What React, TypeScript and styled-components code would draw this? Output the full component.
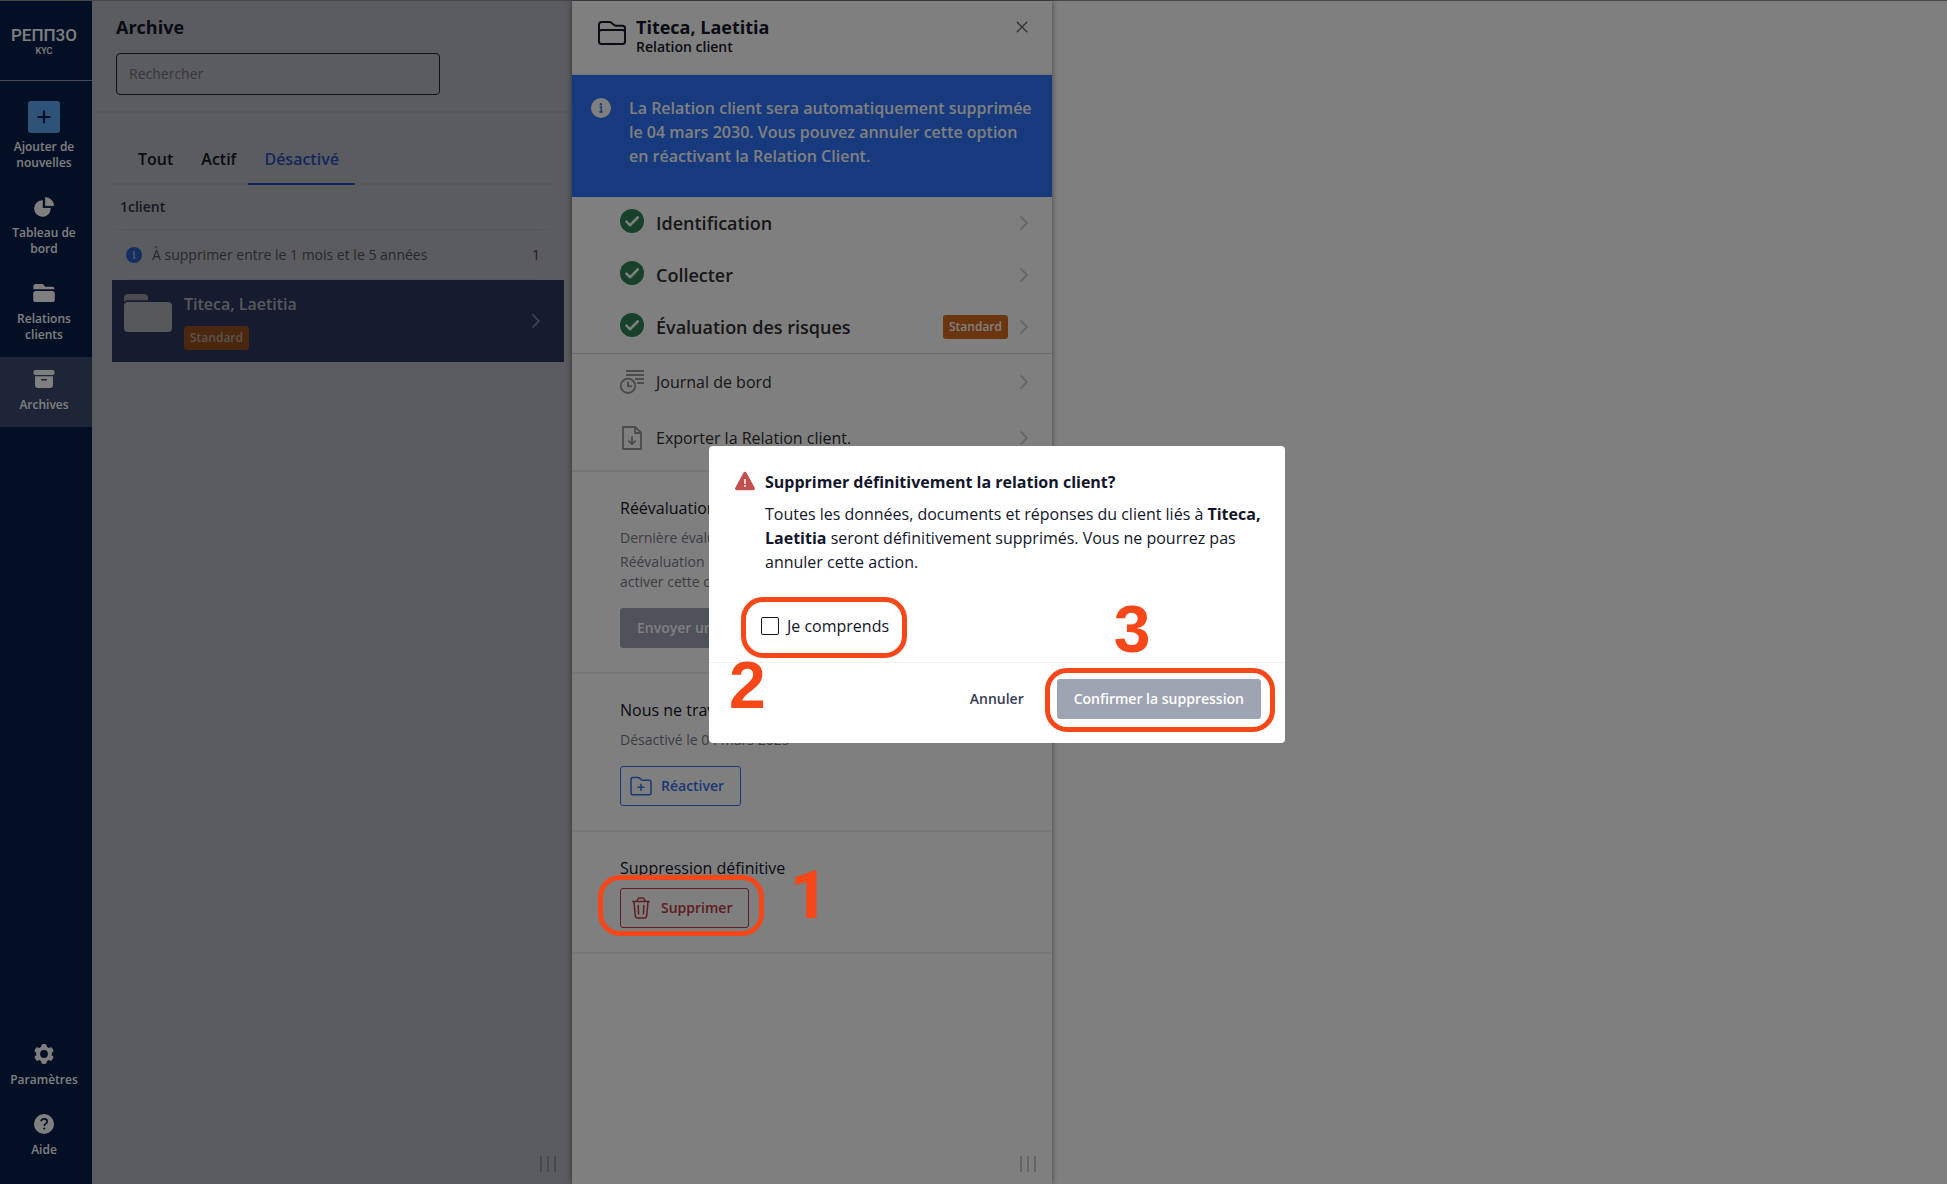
import React from "react";
import styled, { createGlobalStyle } from "styled-components";

const GlobalStyle = createGlobalStyle`
  *, *::before, *::after { box-sizing: border-box; }
  body {
    margin: 0;
    font-family: "Open Sans", "Noto Sans", sans-serif;
    font-size: 14px;
    line-height: 20px;
    color: #12162a;
    background: #ffffff;
  }
  button, input { font-family: inherit; }
  h1, h2, h3, p { margin: 0; }
`;

const ACCENT = "#f54718";

/* ---------- shell ---------- */

const Shell = styled.div`
  display: flex;
  min-height: 100vh;
  border-top: 1px solid #8c8c88;
`;

const Sidebar = styled.nav`
  flex: none;
  width: 92px;
  padding-bottom: 12px;
  display: flex;
  flex-direction: column;
  background: #041e4a;
  color: #ffffff;
`;

const Brand = styled.div`
  height: 80px;
  padding: 24px 4px 0 0;
  display: flex;
  flex-direction: column;
  align-items: center;
  border-bottom: 1px solid #8b93a6;
  margin-bottom: 10px;
`;

const Wordmark = styled.span`
  font-family: "Roboto", sans-serif;
  font-size: 17px;
  font-weight: 500;
  line-height: 20px;
`;

const Product = styled.span`
  font-family: "Roboto", sans-serif;
  font-size: 9px;
  font-weight: 500;
  line-height: 12px;
`;

const NavItem = styled.a<{ $active?: boolean }>`
  display: flex;
  flex-direction: column;
  align-items: center;
  gap: 6px;
  padding: 10px 8px 14px 4px;
  color: #ffffff;
  background: ${(p) => (p.$active ? "#3c4a6c" : "transparent")};
  font-size: 12px;
  font-weight: 600;
  line-height: 16px;
  text-align: center;
  text-decoration: none;
`;

const NavIcon = styled.span`
  height: 24px;
  display: grid;
  place-items: center;
`;

const AddTile = styled.span`
  width: 32px;
  height: 32px;
  border-radius: 3px;
  display: grid;
  place-items: center;
  background: #5ea4f2;
`;

const Spacer = styled.div`
  flex: 1;
`;

/* ---------- archive list ---------- */

const ListPanel = styled.section`
  flex: none;
  width: 480px;
  display: flex;
  flex-direction: column;
  background: #b6b8c0;
`;

const ListHeader = styled.header`
  padding: 14px 24px 16px;
  border-bottom: 2px solid #b0b1b8;
`;

const PanelTitle = styled.h1`
  font-size: 18px;
  font-weight: 700;
  line-height: 24px;
`;

const Search = styled.input`
  display: block;
  width: 324px;
  height: 42px;
  margin-top: 14px;
  padding: 0 12px 2px;
  border: 1px solid #1c2138;
  border-radius: 4px;
  background: transparent;
  font-size: 14px;
  &::placeholder { color: #6c6e78; opacity: 1; }
`;

const Tabs = styled.div`
  display: flex;
  margin: 24px 16px 0;
  padding-left: 16px;
  border-bottom: 2px solid #b0b1b8;
`;

const Tab = styled.button<{ $active?: boolean }>`
  position: relative;
  height: 46px;
  padding: 0 14px 2px;
  border: 0;
  background: none;
  font-size: 16px;
  font-weight: 600;
  color: ${(p) => (p.$active ? "#284fb8" : "#12162a")};
  &::after {
    content: "";
    display: ${(p) => (p.$active ? "block" : "none")};
    position: absolute;
    left: -2px;
    right: -2px;
    bottom: -2px;
    height: 2px;
    background: #284fb8;
  }
`;

const Count = styled.div`
  margin: 0 16px;
  padding: 12px;
  border-bottom: 1px solid #aeb0b7;
  font-weight: 600;
  color: #2c3044;
`;

const GroupRow = styled.div`
  display: flex;
  align-items: center;
  gap: 10px;
  height: 50px;
  margin: 0 32px;
  padding: 0 0 0 2px;
  border-top: 1px solid #b0b1b8;
  border-bottom: 1px solid #b0b1b8;
  color: #50525e;
`;

const GroupCount = styled.span`
  margin-left: auto;
  color: #3c3f4c;
`;

const ClientRow = styled.a`
  display: flex;
  gap: 12px;
  height: 82px;
  margin: 0 8px 0 20px;
  padding: 12px 24px 12px 12px;
  background: #2e3660;
  color: #aeb0b7;
  text-decoration: none;
`;

const ClientInfo = styled.span`
  flex: 1;
  display: flex;
  flex-direction: column;
  align-items: flex-start;
  gap: 10px;
`;

const ClientName = styled.span`
  font-size: 16px;
  font-weight: 600;
  line-height: 24px;
`;

const Badge = styled.span<{ $muted?: boolean }>`
  height: 24px;
  padding: 0 6px;
  border-radius: 3px;
  font-size: 12px;
  font-weight: 600;
  line-height: 24px;
  color: ${(p) => (p.$muted ? "#b4a89e" : "#ffffff")};
  background: ${(p) => (p.$muted ? "#964e20" : "#d66a1e")};
`;

const Middle = styled.span`
  display: flex;
  align-items: center;
`;

const Grip = styled.div`
  display: flex;
  justify-content: space-between;
  width: 16px;
  height: 16px;
  margin: auto 16px 12px auto;
  &::before, &::after, & > i {
    content: "";
    width: 2px;
    background: rgba(0, 0, 0, 0.2);
  }
`;

/* ---------- detail ---------- */

const DetailPanel = styled.section`
  position: relative;
  flex: none;
  width: 480px;
  display: flex;
  flex-direction: column;
  background: #ffffff;
  box-shadow: 0 0 6px rgba(0, 0, 0, 0.5);
`;

const DetailHeader = styled.header`
  display: flex;
  gap: 10px;
  height: 74px;
  padding: 14px 24px 0 26px;
  border-bottom: 2px solid #f0f0f2;
`;

const HeaderIcon = styled.span`
  padding-top: 6px;
  line-height: 0;
`;

const HeaderText = styled.div`
  flex: 1;
`;

const Subtitle = styled.p`
  font-size: 14px;
  font-weight: 600;
  line-height: 16px;
`;

const IconButton = styled.button`
  display: grid;
  place-items: center;
  width: 12px;
  height: 24px;
  padding: 0;
  border: 0;
  background: none;
`;

const Banner = styled.div`
  display: flex;
  gap: 18px;
  padding: 21px 12px 29px 19px;
  background: #2e72fa;
  color: #ffffff;
  font-size: 16px;
  font-weight: 600;
  line-height: 24px;
`;

const BannerIcon = styled.span`
  padding-top: 2px;
  line-height: 0;
`;

const LinkGroup = styled.div<{ $padded?: boolean }>`
  padding-bottom: ${(p) => (p.$padded ? "4px" : "0")};
  border-bottom: ${(p) => (p.$padded ? "2px solid #ececee" : "1px solid #d8d8dc")};
`;

const StepLink = styled.a<{ $minor?: boolean }>`
  display: flex;
  align-items: center;
  gap: 12px;
  height: ${(p) => (p.$minor ? "56px" : "52px")};
  padding: 0 24px 0 48px;
  color: #2e2e30;
  font-size: ${(p) => (p.$minor ? "16px" : "18px")};
  font-weight: ${(p) => (p.$minor ? 400 : 600)};
  line-height: 24px;
  text-decoration: none;
`;

const StepIcon = styled.span<{ $raised?: boolean }>`
  padding-bottom: ${(p) => (p.$raised ? "4px" : "0")};
  line-height: 0;
`;

const StepLabel = styled.span`
  flex: 1;
`;

const Section = styled.section`
  display: flex;
  flex-direction: column;
  align-items: flex-start;
  padding: 24px 48px;
  border-bottom: 2px solid #f0f0f2;
`;

const SectionTitle = styled.h3`
  font-size: 16px;
  font-weight: 400;
  line-height: 24px;
  white-space: nowrap;
`;

const SectionNote = styled.p`
  margin-top: 8px;
  color: #767a8a;
  & + & { margin-top: 4px; }
`;

const ActionSlot = styled.div<{ $tight?: boolean }>`
  position: relative;
  margin-top: ${(p) => (p.$tight ? "8px" : "16px")};
`;

const Button = styled.button<{ $tone: "blue" | "red" | "grey" | "text" }>`
  display: flex;
  align-items: center;
  gap: 8px;
  height: 40px;
  padding: ${(p) => (p.$tone === "blue" || p.$tone === "red" ? "0 16px 0 8px" : "0 17px")};
  border: ${(p) => (p.$tone === "blue" || p.$tone === "red" ? "1px solid currentColor" : "0")};
  border-radius: 3px;
  background: ${(p) => (p.$tone === "grey" ? "#9ea4b2" : "transparent")};
  color: ${(p) =>
    ({ blue: "#3470ee", red: "#be3c42", grey: "#ffffff", text: "#363c52" })[p.$tone]};
  font-size: 14px;
  font-weight: 600;
  line-height: 20px;
  white-space: nowrap;
`;

const Rest = styled.main`
  flex: 1;
  background: #ffffff;
`;

/* ---------- dialog ---------- */

const Overlay = styled.div`
  position: fixed;
  inset: 0;
  z-index: 10;
  display: grid;
  place-items: center;
  padding: 5px 0 0 47px;
  background: rgba(0, 0, 0, 0.5);
`;

const Dialog = styled.div`
  width: 576px;
  border-radius: 4px;
  background: #ffffff;
`;

const DialogBody = styled.div`
  display: grid;
  grid-template-columns: 20px 1fr;
  column-gap: 10px;
  padding: 24px 20px 24px 26px;
  font-size: 16px;
  line-height: 24px;
`;

const DialogTitle = styled.h2`
  font-size: 16px;
  font-weight: 700;
  line-height: 24px;
`;

const DialogText = styled.p`
  grid-column: 2;
  margin-top: 8px;
`;

const Consent = styled.label`
  position: relative;
  grid-column: 1 / -1;
  justify-self: start;
  display: flex;
  align-items: center;
  gap: 8px;
  margin: 40px 0 0 26px;
`;

const Checkbox = styled.input`
  appearance: none;
  width: 18px;
  height: 18px;
  margin: 0;
  border: 1px solid #12162a;
  border-radius: 2px;
  background: #ffffff;
`;

const DialogFooter = styled.footer`
  display: flex;
  justify-content: flex-end;
  gap: 16px;
  padding: 16px 24px 24px;
  border-top: 1px solid #f0f1f3;
`;

const FooterSlot = styled.div`
  position: relative;
`;

/* ---------- tutorial marks ---------- */

const Ring = styled.span<{ $inset: string }>`
  position: absolute;
  z-index: 20;
  inset: ${(p) => p.$inset};
  border: 5px solid ${ACCENT};
  border-radius: 22px;
  pointer-events: none;
`;

const StepNumber = styled.span<{ $left: number; $top: number; $plain?: boolean }>`
  position: absolute;
  z-index: 20;
  left: ${(p) => p.$left}px;
  top: ${(p) => p.$top}px;
  color: ${ACCENT};
  font-family: ${(p) => (p.$plain ? '"Roboto", sans-serif' : '"Liberation Sans", Arial, sans-serif')};
  font-size: 66px;
  font-weight: ${(p) => (p.$plain ? 800 : 700)};
  line-height: 66px;
  pointer-events: none;
`;

/* ---------- icons ---------- */

const Chevron = ({ color = "#cfcfd2" }: { color?: string }) => (
  <svg width="8" height="16" viewBox="0 0 8 16" fill="none" stroke={color} strokeWidth="1.9">
    <path d="M.5 1.500 7 8 .5 14.500" />
  </svg>
);

const InfoIcon = ({ size, fill, mark }: { size: number; fill: string; mark: string }) => (
  <svg width={size} height={size} viewBox="0 0 20 20">
    <circle cx="10" cy="10" r="10" fill={fill} />
    <circle cx="9.900" cy="6.200" r="1.200" fill={mark} />
    <path d="M8.600 9h1.700v4.800M8.400 14h3.400" fill="none" stroke={mark} strokeWidth="1.500" />
  </svg>
);

const CheckIcon = () => (
  <svg width="24" height="24" viewBox="0 0 24 24">
    <circle cx="12" cy="12" r="12" fill="#2e8256" />
    <path d="m6.400 12.600 3.800 3.600 7.600-7.800" fill="none" stroke="#ffffff" strokeWidth="2.600" strokeLinecap="round" strokeLinejoin="round" />
  </svg>
);

const PlusIcon = () => (
  <svg width="14" height="14" viewBox="0 0 14 14" stroke="#041e4a" strokeWidth="2.200" strokeLinecap="round">
    <path d="M7 1.400v11.200M1.400 7h11.200" />
  </svg>
);

const PieIcon = () => (
  <svg width="20" height="20" viewBox="0 0 20 20" fill="#ffffff">
    <path d="M8.800 3.200v7.900h7.900A8.300 8.300 0 1 1 8.800 3.200Z" />
    <path d="M11.400.4A8.500 8.500 0 0 1 19.800 8.700h-8.400Z" stroke="#ffffff" strokeWidth=".6" strokeLinejoin="round" />
  </svg>
);

const FolderSolidIcon = () => (
  <svg width="22" height="18" viewBox="0 0 22 18" fill="#ffffff">
    <path d="M.4 5.600V2.200C.4 1 1.200 0 2.600 0h6c1 0 1.600.3 2.200 1l1.200 1.400c.3.300.6.400 1 .4h6.200c1.300 0 2.200.9 2.200 2.200v.6c-.5-.3-1.100-.4-1.700-.4H2.300c-.7 0-1.300.1-1.900.4Z" />
    <rect x=".2" y="7" width="21.600" height="11" rx="2.600" />
  </svg>
);

const ArchiveIcon = () => (
  <svg width="22" height="18" viewBox="0 0 22 18">
    <rect x=".5" width="21" height="5" rx="2" fill="#ffffff" />
    <path d="M2 6.200h18v8.600a3.200 3.200 0 0 1-3.200 3.200H5.200A3.200 3.200 0 0 1 2 14.800Z" fill="#ffffff" />
    <path d="M8.600 9.700h4.800" stroke="#3c4a6c" strokeWidth="1.400" strokeLinecap="round" />
  </svg>
);

const GearIcon = () => (
  <svg width="20" height="20" viewBox="0 0 20 20" fill="#ffffff">
    <circle cx="10" cy="10" r="5.800" fill="none" stroke="#ffffff" strokeWidth="3.800" />
    {[0, 60, 120, 180, 240, 300].map((a) => (
      <rect key={a} x="7.200" y="0" width="5.600" height="5" rx="2.200" transform={`rotate(${a} 10 10)`} />
    ))}
  </svg>
);

const HelpIcon = () => (
  <svg width="20" height="20" viewBox="0 0 20 20">
    <circle cx="10" cy="10" r="10" fill="#ffffff" />
    <path d="M7 7.300C7.400 5.700 8.500 4.900 10.100 4.900c1.900 0 3.100 1 3.100 2.500 0 1.300-.8 1.900-1.700 2.500-.9.600-1.300 1-1.300 2.100" fill="none" stroke="#041e4a" strokeWidth="1.700" />
    <circle cx="10.200" cy="14.500" r="1.100" fill="#041e4a" />
  </svg>
);

const BigFolderIcon = () => (
  <svg width="48" height="42" viewBox="0 0 48 42">
    <path d="M0 10V6a4 4 0 0 1 4-4h16a4 4 0 0 1 4 4v2.200H4C2 8.200.8 8.800 0 10Z" fill="#96979e" />
    <rect y="10" width="48" height="30" rx="4" fill="#aeb0b4" />
  </svg>
);

const FolderOutlineIcon = () => (
  <svg width="28" height="24" viewBox="0 0 28 24" fill="none" stroke="#12162a" strokeWidth="2" strokeLinejoin="round">
    <path d="M1 20V3.500C1 2 2 1 3.500 1h7.800c.8 0 1.400.2 2 .8l2.800 2.300c.5.400 1 .6 1.700.6h6.700C26 4.700 27 5.700 27 7.200V20.500c0 1.500-1 2.500-2.500 2.500h-21C2 23 1 22 1 20.500V11.300C1 9.800 2 8.900 3.500 8.900h21c1.500 0 2.500.9 2.500 2.400" />
  </svg>
);

const CloseIcon = () => (
  <svg width="12" height="12" viewBox="0 0 12 12" stroke="#5c6070" strokeWidth="1.300" strokeLinecap="round">
    <path d="m1.200 1.200 9.600 9.600M10.800 1.200l-9.600 9.600" />
  </svg>
);

const LogIcon = () => (
  <svg width="24" height="24" viewBox="0 0 24 24" fill="none" stroke="#96969a" strokeWidth="1.900">
    <path d="M6 1h18M6 5h18M15 9h9M17 13h7" />
    <circle cx="8" cy="15.800" r="7.200" />
    <path d="M8 11.500v4.800h4" />
  </svg>
);

const ExportIcon = () => (
  <svg width="24" height="24" viewBox="0 0 24 24" fill="none" stroke="#96969a" strokeWidth="1.800" strokeLinejoin="round">
    <path d="M15.200 1H3v22h18V6.600Z" />
    <path d="M15 1v6h6M12 10.500v7.500M8.400 14.700l3.600 3.500 3.600-3.500" />
  </svg>
);

const FolderPlusIcon = () => (
  <svg width="24" height="24" viewBox="0 0 24 24" fill="none" stroke="currentColor" strokeWidth="1.500" strokeLinecap="round" strokeLinejoin="round">
    <path d="M2 18.700V5.300C2 4.200 2.900 3.500 4 3.500h5.200c.6 0 1 .2 1.400.6l1.700 1.600c.4.400.9.600 1.400.6H20c1.200 0 2 .8 2 2v10.400c0 1.200-.8 2-2 2H4c-1.200 0-2-.8-2-2ZM12 10.200v6M9 13.200h6" />
  </svg>
);

const TrashIcon = () => (
  <svg width="24" height="24" viewBox="0 0 24 24" fill="none" stroke="currentColor" strokeWidth="1.500" strokeLinecap="round" strokeLinejoin="round">
    <path d="M3.700 5.500h16.600M8 5.300l.5-1.500C8.800 2.500 9.600 2 10.700 2h2.600c1.100 0 1.900.5 2.200 1.800l.5 1.500M5 5.800l1.300 14c.1 1.400 1 2.200 2.300 2.200h6.800c1.300 0 2.200-.8 2.300-2.200l1.300-14M9.200 9.500l.4 8.500M14.800 9.500l-.4 8.500" />
  </svg>
);

const WarningIcon = () => (
  <svg width="20" height="22" viewBox="0 0 20 22">
    <path d="M10 3.500 1.800 18.500h16.400Z" fill="#c24f4f" stroke="#c24f4f" strokeWidth="3.400" strokeLinejoin="round" />
    <path d="M10 9v5" stroke="#ffffff" strokeWidth="1.400" />
    <circle cx="10" cy="16" r=".9" fill="#ffffff" />
  </svg>
);

/* ---------- data ---------- */

const NAV = [
  { label: "Tableau de bord", icon: <PieIcon /> },
  { label: "Relations clients", icon: <FolderSolidIcon /> },
  { label: "Archives", icon: <ArchiveIcon />, active: true },
];

const STEPS = [
  { label: "Identification" },
  { label: "Collecter" },
  { label: "Évaluation des risques", badge: "Standard" },
];

export default function App() {
  return (
    <>
      <GlobalStyle />
      <Shell>
        <Sidebar>
          <Brand>
            <Wordmark>PEПП3O</Wordmark>
            <Product>KYC</Product>
          </Brand>
          <NavItem href="#nouvelles">
            <AddTile><PlusIcon /></AddTile>
            Ajouter de nouvelles
          </NavItem>
          {NAV.map((n) => (
            <NavItem key={n.label} href="#" $active={n.active}>
              <NavIcon>{n.icon}</NavIcon>
              {n.label}
            </NavItem>
          ))}
          <Spacer />
          <NavItem href="#parametres">
            <NavIcon><GearIcon /></NavIcon>
            Paramètres
          </NavItem>
          <NavItem href="#aide">
            <NavIcon><HelpIcon /></NavIcon>
            Aide
          </NavItem>
        </Sidebar>

        <ListPanel>
          <ListHeader>
            <PanelTitle>Archive</PanelTitle>
            <Search type="search" placeholder="Rechercher" aria-label="Rechercher" />
          </ListHeader>
          <Tabs role="tablist">
            <Tab role="tab">Tout</Tab>
            <Tab role="tab">Actif</Tab>
            <Tab role="tab" aria-selected $active>Désactivé</Tab>
          </Tabs>
          <Count>1client</Count>
          <GroupRow>
            <InfoIcon size={16} fill="#2a5cc4" mark="#b6b8c0" />
            <span>À supprimer entre le 1 mois et le 5 années</span>
            <GroupCount>1</GroupCount>
          </GroupRow>
          <ClientRow href="#client">
            <BigFolderIcon />
            <ClientInfo>
              <ClientName>Titeca, Laetitia</ClientName>
              <Badge $muted>Standard</Badge>
            </ClientInfo>
            <Middle><Chevron color="#7c8098" /></Middle>
          </ClientRow>
          <Grip><i /></Grip>
        </ListPanel>

        <DetailPanel>
          <DetailHeader>
            <HeaderIcon><FolderOutlineIcon /></HeaderIcon>
            <HeaderText>
              <PanelTitle as="h2">Titeca, Laetitia</PanelTitle>
              <Subtitle>Relation client</Subtitle>
            </HeaderText>
            <IconButton aria-label="Fermer"><CloseIcon /></IconButton>
          </DetailHeader>
          <Banner>
            <BannerIcon><InfoIcon size={20} fill="#ffffff" mark="#2e72fa" /></BannerIcon>
            <p>
              La Relation client sera automatiquement supprimée le 04 mars 2030. Vous pouvez
              annuler cette option en réactivant la Relation Client.
            </p>
          </Banner>
          <LinkGroup>
            {STEPS.map((s) => (
              <StepLink key={s.label} href="#">
                <StepIcon $raised><CheckIcon /></StepIcon>
                <StepLabel>{s.label}</StepLabel>
                {s.badge && <Badge>{s.badge}</Badge>}
                <Chevron />
              </StepLink>
            ))}
          </LinkGroup>
          <LinkGroup $padded>
            <StepLink href="#journal" $minor>
              <StepIcon><LogIcon /></StepIcon>
              <StepLabel>Journal de bord</StepLabel>
              <Chevron />
            </StepLink>
            <StepLink href="#export" $minor>
              <StepIcon><ExportIcon /></StepIcon>
              <StepLabel>Exporter la Relation client.</StepLabel>
              <Chevron />
            </StepLink>
          </LinkGroup>
          <Section>
            <SectionTitle>Réévaluation</SectionTitle>
            <SectionNote>Dernière évaluation</SectionNote>
            <SectionNote>
              Réévaluation
              <br />
              activer cette option
            </SectionNote>
            <ActionSlot>
              <Button $tone="grey">Envoyer une demande</Button>
            </ActionSlot>
          </Section>
          <Section>
            <SectionTitle>Nous ne travaillons plus</SectionTitle>
            <SectionNote>Désactivé le 04 mars 2025</SectionNote>
            <ActionSlot>
              <Button $tone="blue"><FolderPlusIcon />Réactiver</Button>
            </ActionSlot>
          </Section>
          <Section>
            <SectionTitle>Suppression définitive</SectionTitle>
            <ActionSlot $tight>
              <Button $tone="red"><TrashIcon />Supprimer</Button>
              <Ring $inset="-13px -15px -8px -22px" />
              <StepNumber $plain $left={170} $top={-25}>1</StepNumber>
            </ActionSlot>
          </Section>
          <Grip><i /></Grip>
        </DetailPanel>
        <Rest />
      </Shell>

      <Overlay>
        <Dialog role="dialog" aria-labelledby="dialog-title">
          <DialogBody>
            <WarningIcon />
            <DialogTitle id="dialog-title">Supprimer définitivement la relation client?</DialogTitle>
            <DialogText>
              Toutes les données, documents et réponses du client liés à <b>Titeca, Laetitia</b>{" "}
              seront définitivement supprimés. Vous ne pourrez pas annuler cette action.
            </DialogText>
            <Consent>
              <Checkbox type="checkbox" />
              Je comprends
              <Ring $inset="-17px -18px -20px -20px" />
              <StepNumber $left={-32} $top={38}>2</StepNumber>
            </Consent>
          </DialogBody>
          <DialogFooter>
            <Button $tone="text">Annuler</Button>
            <FooterSlot>
              <Button $tone="grey">Confirmer la suppression</Button>
              <Ring $inset="-11px -14px -13px -12px" />
              <StepNumber $left={57} $top={-83}>3</StepNumber>
            </FooterSlot>
          </DialogFooter>
        </Dialog>
      </Overlay>
    </>
  );
}
